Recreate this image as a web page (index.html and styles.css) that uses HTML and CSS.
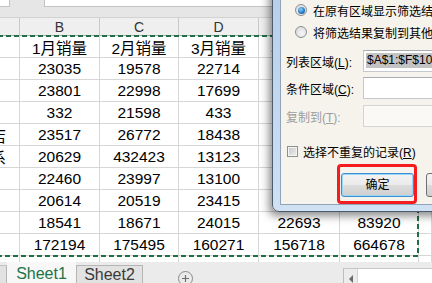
FILE: index.html
```html
<!DOCTYPE html>
<html lang="zh-CN">
<head>
<meta charset="utf-8">
<link rel="stylesheet" href="styles.css">
</head>
<body>
<div class="app">
  <div class="formula-bar">
    <div class="name-box"></div>
    <div class="fx-input"></div>
  </div>
  <div class="sheet">
    <div class="grid">
      <div class="c h"></div><div class="c h">B</div><div class="c h">C</div><div class="c h">D</div><div class="c h">E</div><div class="c h">F</div><div class="c h"></div>

      <div class="c a"></div><div class="c">1月销量</div><div class="c">2月销量</div><div class="c">3月销量</div><div class="c">4月销量</div><div class="c">合计</div><div class="c"></div>
      <div class="c a"></div><div class="c">23035</div><div class="c">19578</div><div class="c">22714</div><div class="c">21345</div><div class="c">86672</div><div class="c"></div>
      <div class="c a"></div><div class="c">23801</div><div class="c">22998</div><div class="c">17699</div><div class="c">19876</div><div class="c">84374</div><div class="c"></div>
      <div class="c a"></div><div class="c">332</div><div class="c">21598</div><div class="c">433</div><div class="c">25643</div><div class="c">48006</div><div class="c"></div>
      <div class="c a">华东店</div><div class="c">23517</div><div class="c">26772</div><div class="c">18438</div><div class="c">20987</div><div class="c">89714</div><div class="c"></div>
      <div class="c a">华北联系</div><div class="c">20629</div><div class="c">432423</div><div class="c">13123</div><div class="c">22156</div><div class="c">488331</div><div class="c"></div>
      <div class="c a"></div><div class="c">22460</div><div class="c">23997</div><div class="c">13100</div><div class="c">18754</div><div class="c">78311</div><div class="c"></div>
      <div class="c a"></div><div class="c">20614</div><div class="c">20519</div><div class="c">23415</div><div class="c">24310</div><div class="c">88858</div><div class="c"></div>
      <div class="c a"></div><div class="c">18541</div><div class="c">18671</div><div class="c">24015</div><div class="c">22693</div><div class="c">83920</div><div class="c"></div>
      <div class="c a"></div><div class="c">172194</div><div class="c">175495</div><div class="c">160271</div><div class="c">156718</div><div class="c">664678</div><div class="c"></div>
      <div class="c a"></div><div class="c"></div><div class="c"></div><div class="c"></div><div class="c"></div><div class="c"></div><div class="c"></div>
    </div>
    <svg class="ants" width="432" height="244" viewBox="0 0 432 244">
      <rect x="-10" y="18" width="428" height="220" fill="none" stroke="#1f6e45" stroke-width="2" stroke-dasharray="5 3"/>
    </svg>
  </div>
  <div class="tabs">
    <div class="tab-stub"></div>
    <div class="tab active">Sheet1</div>
    <div class="tab">Sheet2</div>
    <div class="add">
      <svg width="13" height="13" viewBox="0 0 13 13"><path d="M6.5 3v7M3 6.5h7" stroke="#6f6f6f" stroke-width="1.2" fill="none"/></svg>
    </div>
    <div class="hscroll"><span class="arr-box"><span class="arr"></span></span><span class="track"></span></div>
  </div>

  <div class="dialog">
    <div class="dlg-body">
      <div class="opt first"><span class="radio on"></span><span>在原有区域显示筛选结果(<u>F</u>)</span></div>
      <div class="opt second"><span class="radio"></span><span>将筛选结果复制到其他位置(<u>O</u>)</span></div>
      <div class="field f1"><span class="lbl">列表区域(<u>L</u>):</span><div class="inp"><span class="sel">$A$1:$F$10</span></div></div>
      <div class="field f2"><span class="lbl">条件区域(<u>C</u>):</span><div class="inp"></div></div>
      <div class="field f3 disabled"><span class="lbl">复制到(<u>T</u>):</span><div class="inp"></div></div>
      <div class="chk-row"><span class="chk"></span><span>选择不重复的记录(<u>R</u>)</span></div>
      <div class="btn-row">
        <div class="hl"><div class="btn default">确定</div></div>
        <div class="btn cancel">取消</div>
      </div>
    </div>
  </div>
</div>
</body>
</html>
```

FILE: styles.css
```css
* { box-sizing: border-box; }
html, body {
  margin: 0;
  padding: 0;
}
body {
  width: 432px;
  height: 283px;
  overflow: hidden;
  background: #fff;
  font-family: "Liberation Sans", "Noto Sans CJK SC", sans-serif;
}
.app {
  position: relative;
  width: 432px;
  height: 283px;
  display: flex;
  flex-direction: column;
  overflow: hidden;
}

/* formula bar */
.formula-bar {
  height: 18px;
  flex: none;
  display: flex;
  align-items: flex-start;
  background: #e6e6e6;
  border-bottom: 1px solid #d2d2d2;
}
.name-box {
  width: 10px;
  height: 7px;
  background: #fff;
  border-right: 1px solid #c3c3c3;
  border-bottom: 1px solid #c3c3c3;
}
.fx-input {
  margin-left: 34px;
  flex: 1;
  height: 7px;
  background: #fff;
  border-left: 1px solid #c3c3c3;
  border-bottom: 1px solid #c3c3c3;
}

/* sheet */
.sheet {
  position: relative;
  flex: none;
  height: 244px;
  overflow: hidden;
  background: #fff;
}
.grid {
  display: grid;
  grid-template-columns: 20px 80px 79px 80px 81px 79px 1fr;
  grid-template-rows: 18px repeat(11, 22px);
}
.c {
  display: flex;
  align-items: center;
  justify-content: center;
  border-right: 1px solid #d6d6d6;
  border-bottom: 1px solid #d6d6d6;
  font-size: 15.5px;
  color: #000;
  white-space: nowrap;
  overflow: hidden;
}
.c.h {
  background: #efefef;
  border-right-color: #c9c9c9;
  border-bottom-color: #aaaaaa;
  font-size: 14px;
  color: #333;
}
.c.a {
  justify-content: flex-end;
  padding-right: 13px;
}
.ants {
  position: absolute;
  left: 0;
  top: 0;
  pointer-events: none;
}

/* sheet tabs */
.tabs {
  flex: none;
  height: 21px;
  display: flex;
  align-items: flex-end;
  background: #ebebeb;
}
.tab-stub {
  width: 7px;
  height: 18px;
  background: #e2e2e2;
  border-top: 1px solid #c4c4c4;
  border-right: 1px solid #b5b5b5;
}
.tab {
  width: 67px;
  height: 18px;
  line-height: 17px;
  text-align: center;
  font-size: 16px;
  color: #3a3a3a;
  background: #e2e2e2;
  border-top: 1px solid #b5b5b5;
  border-right: 1px solid #b5b5b5;
  border-left: 1px solid #b5b5b5;
}
.tab.active {
  width: 69px;
  height: 21px;
  padding-top: 3px;
  background: #f7f7f7;
  color: #217346;
  border: none;
}
.add {
  align-self: flex-start;
  margin-top: 9px;
  margin-left: 35px;
  width: 15px;
  height: 15px;
  border: 1px solid #8a8a8a;
  border-radius: 50%;
  display: flex;
  align-items: center;
  justify-content: center;
}
.hscroll {
  margin-left: auto;
  width: 89px;
  height: 15px;
  display: flex;
  border-top: 1px solid #c6c6c6;
  border-left: 1px solid #bdbdbd;
  background: #ececec;
}
.arr-box {
  width: 13px;
  display: flex;
  justify-content: center;
  padding-top: 6px;
}
.arr {
  width: 0;
  height: 0;
  border-top: 4px solid transparent;
  border-bottom: 4px solid transparent;
  border-right: 4px solid #6a6a6a;
}
.track {
  flex: 1;
  background: #fff;
  border-left: 1px solid #d4d4d4;
}

/* dialog */
.dialog {
  position: absolute;
  left: 272px;
  top: -31px;
  width: 260px;
  height: 243px;
  border: 1px solid #4d5c6c;
  border-radius: 7px;
  padding: 30px 6px 6px 7px;
  background: linear-gradient(#b6cde6, #c4d9ef 60%, #cfe1f3);
  box-shadow: -3px 4px 8px rgba(0, 0, 0, 0.45);
  font-size: 12px;
  color: #000;
}
.dlg-body {
  height: 100%;
  background: #f5f3ec;
  border: 1px solid #8fa3ba;
  border-top: none;
  padding-top: 3px;
  white-space: nowrap;
  overflow: hidden;
}
.opt {
  display: flex;
  align-items: center;
  height: 14px;
  padding-left: 14px;
  gap: 6px;
}
.opt.second { margin-top: 8px; }
.radio {
  width: 12px;
  height: 12px;
  flex: none;
  border-radius: 50%;
  border: 1px solid #8b8e91;
  background: radial-gradient(circle at 60% 65%, #f6f6f6, #d6d6d6);
  display: flex;
  align-items: center;
  justify-content: center;
}
.radio.on::after {
  content: "";
  width: 7px;
  height: 7px;
  border-radius: 50%;
  background: radial-gradient(circle at 40% 35%, #8fd4ff, #2a7cc7 55%, #0c3f7c);
}
.field {
  display: flex;
  align-items: center;
  height: 22px;
  padding-left: 5px;
}
.field.f1 { margin-top: 11px; }
.field.f2 { margin-top: 5px; }
.field.f3 { margin-top: 6px; }
.lbl {
  width: 77px;
  flex: none;
}
.inp {
  flex: 1;
  height: 22px;
  background: #fff;
  border: 1px solid #c5c9cf;
  border-top-color: #a9adb3;
  padding: 2px 0 0 2px;
}
.sel {
  display: inline-block;
  height: 15px;
  line-height: 15px;
  background: #c3c3c3;
  padding: 0 1px;
}
.field.disabled .lbl { color: #9d9d9d; }
.field.disabled .inp {
  background: #faf9f6;
  border-color: #d3d5d8;
}
.chk-row {
  display: flex;
  align-items: center;
  height: 14px;
  margin-top: 17px;
  padding-left: 6px;
  gap: 5px;
}
.chk {
  width: 11px;
  height: 11px;
  flex: none;
  border: 1px solid #8e8f8f;
  background: linear-gradient(135deg, #c4c4c4, #f2f2f2);
  box-shadow: inset 0 0 0 1px #f4f4f4;
}
.btn-row {
  display: flex;
  align-items: flex-start;
  margin-top: 6px;
  padding-left: 56px;
}
.hl {
  width: 80px;
  height: 40px;
  border: 3px solid #f41c1c;
  border-radius: 4px;
  padding: 6px 0 0 1px;
}
.btn {
  width: 73px;
  height: 24px;
  line-height: 22px;
  text-align: center;
  border: 1px solid #707070;
  border-radius: 3px;
  background: linear-gradient(#f3f3f3 0%, #ebebeb 48%, #dcdcdc 52%, #cfcfcf 100%);
}
.btn.default {
  border-color: #3c8fd0;
  box-shadow: inset 0 0 0 1px #9ad6f6;
}
.btn.cancel {
  margin-left: 9px;
  margin-top: 9px;
}
```
